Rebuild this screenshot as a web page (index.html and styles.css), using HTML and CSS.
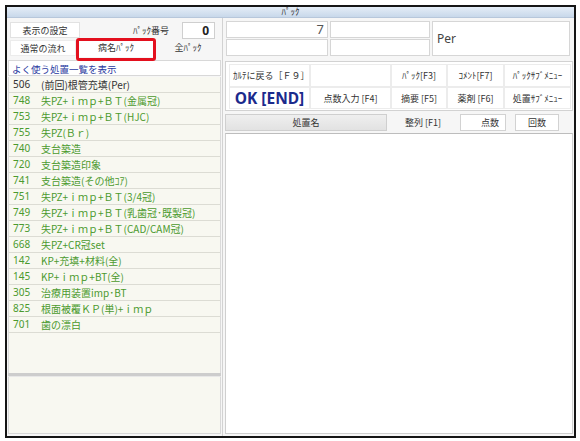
FILE: index.html
```html
<!DOCTYPE html>
<html lang="ja">
<head>
<meta charset="utf-8">
<title>ﾊﾟｯｸ</title>
<link rel="stylesheet" href="styles.css">
</head>
<body>
<div class="frame">
  <div class="titlebar">ﾊﾟｯｸ</div>
  <div class="main">
    <div class="left">
      <div class="ctrl">
        <div class="ctrl-row">
          <div class="btn b-disp">表示の設定</div>
          <div class="lbl">ﾊﾟｯｸ番号</div>
          <div class="numbox">0</div>
        </div>
        <div class="ctrl-row">
          <div class="btn b-flow">通常の流れ</div>
          <div class="tab sel">病名ﾊﾟｯｸ</div>
          <div class="tab">全ﾊﾟｯｸ</div>
        </div>
      </div>
      <div class="list-head">よく使う処置一覧を表示</div>
      <div class="list">
        <div class="row dark"><span class="code">506</span><span>(前回)根管充填(Per)</span></div>
        <div class="row"><span class="code">748</span><span>失PZ+ｉｍｐ+ＢＴ(金属冠)</span></div>
        <div class="row"><span class="code">753</span><span>失PZ+ｉｍｐ+ＢＴ(HJC)</span></div>
        <div class="row"><span class="code">755</span><span>失PZ(Ｂｒ)</span></div>
        <div class="row"><span class="code">740</span><span>支台築造</span></div>
        <div class="row"><span class="code">720</span><span>支台築造印象</span></div>
        <div class="row"><span class="code">741</span><span>支台築造(その他ｺｱ)</span></div>
        <div class="row"><span class="code">751</span><span>失PZ+ｉｍｐ+ＢＴ(3/4冠)</span></div>
        <div class="row"><span class="code">749</span><span>失PZ+ｉｍｐ+ＢＴ(乳歯冠･既製冠)</span></div>
        <div class="row"><span class="code">773</span><span>失PZ+ｉｍｐ+ＢＴ(CAD/CAM冠)</span></div>
        <div class="row"><span class="code">668</span><span>失PZ+CR冠set</span></div>
        <div class="row"><span class="code">142</span><span>KP+充填+材料(全)</span></div>
        <div class="row"><span class="code">145</span><span>KP+ｉｍｐ+BT(全)</span></div>
        <div class="row"><span class="code">305</span><span>治療用装置imp･BT</span></div>
        <div class="row"><span class="code">825</span><span>根面被覆ＫＰ(単)+ｉｍｐ</span></div>
        <div class="row"><span class="code">701</span><span>歯の漂白</span></div>
      </div>
      <div class="splitter"></div>
      <div class="lower"></div>
    </div>
    <div class="right">
      <div class="topboxes">
        <div class="field f-num">7</div>
        <div class="field"></div>
        <div class="field f-per">Per</div>
        <div class="field"></div>
        <div class="field"></div>
      </div>
      <div class="buttons">
        <div class="kbtn">ｶﾙﾃに戻る［Ｆ９］</div>
        <div class="kbtn"></div>
        <div class="kbtn">ﾊﾟｯｸ[F3]</div>
        <div class="kbtn">ｺﾒﾝﾄ[F7]</div>
        <div class="kbtn">ﾊﾟｯｸｻﾌﾞﾒﾆｭｰ</div>
        <div class="kbtn ok">OK [END]</div>
        <div class="kbtn">点数入力 [F4]</div>
        <div class="kbtn">摘要 [F5]</div>
        <div class="kbtn">薬剤 [F6]</div>
        <div class="kbtn">処置ｻﾌﾞﾒﾆｭｰ</div>
      </div>
      <div class="thead">
        <div class="th-name">処置名</div>
        <div class="th-sort">整列 [F1]</div>
        <div class="th-pts">点数</div>
        <div class="th-cnt">回数</div>
      </div>
      <div class="rlist"></div>
    </div>
  </div>
</div>
</body>
</html>
```

FILE: styles.css
```css
body {
  margin: 0;
  background: #ffffff;
  font-family: "Noto Sans CJK JP", "Noto Sans", sans-serif;
  font-size: 9px;
  color: #333333;
}

.frame {
  margin: 5px 0 0 5px;
  width: 571px;
  height: 433px;
  box-sizing: border-box;
  border: 2px solid #151515;
  display: flex;
  flex-direction: column;
}

.titlebar {
  height: 10px;
  line-height: 10px;
  background: linear-gradient(#e4edf7, #c8d8ea);
  border-bottom: 1px solid #b7c7db;
  text-align: center;
  font-size: 9px;
  color: #333333;
}

.main {
  flex: 1;
  display: flex;
  background: #f6f6f6;
}

/* ---------- left column ---------- */
.left {
  width: 215px;
  display: flex;
  flex-direction: column;
  border-right: 1px solid #d2d2d2;
  padding-bottom: 2px;
}

.ctrl {
  height: 41px;
  box-sizing: border-box;
  padding: 3px 1px 0 3px;
  display: flex;
  flex-direction: column;
}

.ctrl-row {
  display: flex;
  align-items: center;
  height: 18px;
}

.btn {
  height: 16px;
  line-height: 16px;
  box-sizing: border-box;
  background: #ffffff;
  border: 1px solid #e2e2e2;
  text-align: center;
  color: #333333;
}

.b-disp { width: 70px; }
.b-flow { width: 66px; border-color: #ececec; }

.lbl {
  margin-left: 53px;
  width: 38px;
  text-align: left;
  color: #333333;
}

.numbox {
  margin-left: 11px;
  width: 33px;
  height: 17px;
  box-sizing: border-box;
  background: #ffffff;
  border: 1px solid #cfcfcf;
  text-align: right;
  padding-right: 5px;
  font-family: "Noto Sans", sans-serif;
  font-weight: bold;
  font-size: 12px;
  line-height: 15px;
  color: #222222;
}

.tab {
  position: relative;
  height: 18px;
  line-height: 18px;
  text-align: center;
  color: #333333;
}

.tab.sel {
  width: 78px;
  margin-left: 1px;
  background: #ffffff;
}

.tab.sel::after {
  content: "";
  position: absolute;
  left: -1px;
  right: -1px;
  top: -1px;
  bottom: -4px;
  border: 3px solid #e3101e;
  border-radius: 3px;
}

.tab:last-child {
  flex: 1;
}

.list-head {
  margin: 1px 1px 1px 1px;
  height: 16px;
  line-height: 16px;
  box-sizing: border-box;
  background: #ffffff;
  border: 1px solid #d8d8d8;
  color: #2a3aa0;
  padding-left: 3px;
  font-size: 9.5px;
}

.list {
  flex: 1;
  margin: 0 1px;
  background: #f8f8f1;
  border: 1px solid #dadada;
  border-top: none;
  border-bottom: none;
}

.row {
  height: 16px;
  line-height: 15px;
  box-sizing: border-box;
  border-bottom: 1px solid #dcdcd4;
  color: #4b9a2e;
  font-size: 10px;
  display: flex;
  white-space: nowrap;
}

.row.dark { color: #333333; }

.code {
  width: 28px;
  padding-left: 4px;
  font-family: "Noto Sans", sans-serif;
  font-size: 10px;
}

.splitter {
  height: 4px;
  margin: 0 1px;
  background: #cdcdcd;
  border-bottom: 1px solid #e8e8e8;
  box-sizing: border-box;
}

.lower {
  height: 56px;
  margin: 0 1px;
  background: #f8f8f1;
  border: 1px solid #d8d8d8;
  border-top: none;
}

/* ---------- right column ---------- */
.right {
  flex: 1;
  display: flex;
  flex-direction: column;
  padding: 0 1px 2px 2px;
}

.topboxes {
  height: 41px;
  box-sizing: border-box;
  padding: 3px 1px 0 1px;
  display: grid;
  grid-template-columns: 102px 100px 138px;
  grid-template-rows: 17px 17px;
  column-gap: 2px;
  row-gap: 1px;
}

.field {
  background: #ffffff;
  border: 1px solid #d6d6d6;
  box-sizing: border-box;
}

.f-num {
  text-align: right;
  padding-right: 3px;
  font-family: "Noto Sans", sans-serif;
  font-size: 13px;
  line-height: 15px;
  color: #555555;
}

.f-per {
  grid-row: 1 / span 2;
  grid-column: 3;
  font-family: "Noto Sans", sans-serif;
  font-size: 12px;
  line-height: 33px;
  padding-left: 4px;
  color: #444444;
}

.buttons {
  margin-top: 2px;
  height: 50px;
  box-sizing: border-box;
  background: #ffffff;
  border: 1px solid #d2d2d2;
  padding: 2px 1px 2px 3px;
  display: grid;
  grid-template-columns: 81px 81px 56px 57px 67px;
  grid-template-rows: 23px 22px;
}

.kbtn {
  border: 1px solid #ececec;
  box-sizing: border-box;
  display: flex;
  align-items: center;
  justify-content: center;
  white-space: nowrap;
  color: #333333;
  font-size: 9px;
}

.kbtn:first-child {
  justify-content: flex-start;
  padding-left: 3px;
}

.kbtn.ok {
  font-family: "Noto Sans", sans-serif;
  font-weight: bold;
  font-size: 15.5px;
  color: #1b2a8c;
}

.thead {
  margin-top: 3px;
  height: 17px;
  display: flex;
  align-items: stretch;
}

.th-name {
  width: 162px;
  box-sizing: border-box;
  background: linear-gradient(#efefef, #e2e2e2);
  border: 1px solid #cfcfcf;
  text-align: center;
  line-height: 15px;
}

.th-sort {
  width: 72px;
  text-align: center;
  line-height: 17px;
}

.th-pts {
  width: 46px;
  margin-left: 1px;
  box-sizing: border-box;
  background: #ffffff;
  border: 1px solid #d2d2d2;
  text-align: right;
  padding-right: 6px;
  line-height: 15px;
}

.th-cnt {
  width: 44px;
  margin-left: 9px;
  box-sizing: border-box;
  background: #ffffff;
  border: 1px solid #d2d2d2;
  text-align: center;
  line-height: 15px;
}

.rlist {
  flex: 1;
  margin-top: 2px;
  background: #ffffff;
  border: 1px solid #cfcfcf;
  border-top-color: #bdbdbd;
}
```
